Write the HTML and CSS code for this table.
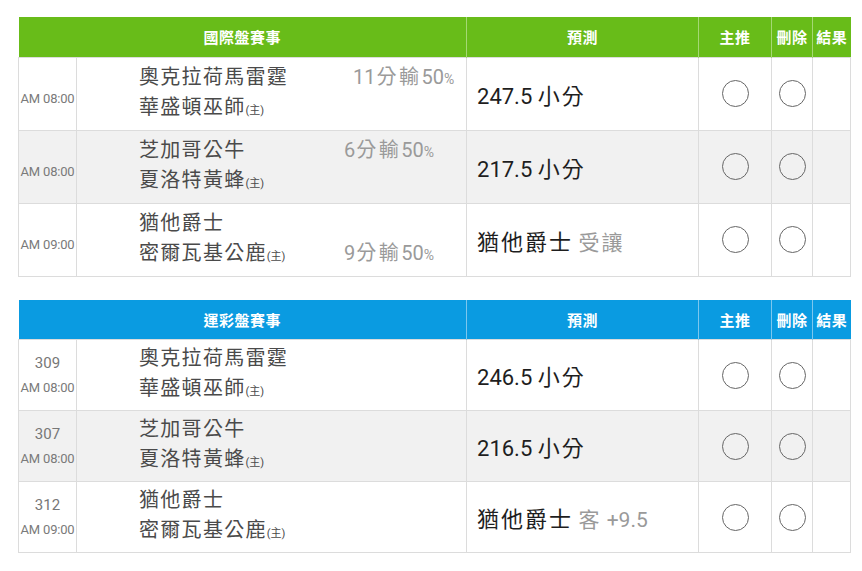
FILE: index.html
```html
<!DOCTYPE html>
<html lang="zh-Hant">
<head>
<meta charset="utf-8">
<link rel="stylesheet" href="styles.css">
</head>
<body>
<div class="page">
  <table class="board board-intl">
    <colgroup>
      <col class="c-time"><col class="c-team"><col class="c-pred"><col class="c-main"><col class="c-del"><col class="c-res">
    </colgroup>
    <thead>
      <tr><th colspan="2">國際盤賽事</th><th>預測</th><th>主推</th><th>刪除</th><th>結果</th></tr>
    </thead>
    <tbody>
      <tr>
        <td class="time time-only"><span class="clock">AM 08:00</span></td>
        <td class="teams">
          <div class="team-wrap">
            <div class="names"><div>奧克拉荷馬雷霆</div><div>華盛頓巫師<small>(主)</small></div></div>
            <div class="spread"><div class="line line-a">11<span class="cjk">分輸</span>50<small>%</small></div><div class="line"></div></div>
          </div>
        </td>
        <td class="pred">247.5 <span class="cjk">小分</span></td>
        <td class="pick"><span class="ring"></span></td>
        <td class="pick"><span class="ring"></span></td>
        <td></td>
      </tr>
      <tr class="alt">
        <td class="time time-only"><span class="clock">AM 08:00</span></td>
        <td class="teams">
          <div class="team-wrap">
            <div class="names"><div>芝加哥公牛</div><div>夏洛特黃蜂<small>(主)</small></div></div>
            <div class="spread"><div class="line">6<span class="cjk">分輸</span>50<small>%</small></div><div class="line"></div></div>
          </div>
        </td>
        <td class="pred">217.5 <span class="cjk">小分</span></td>
        <td class="pick"><span class="ring"></span></td>
        <td class="pick"><span class="ring"></span></td>
        <td></td>
      </tr>
      <tr>
        <td class="time time-only"><span class="clock">AM 09:00</span></td>
        <td class="teams">
          <div class="team-wrap">
            <div class="names"><div>猶他爵士</div><div>密爾瓦基公鹿<small>(主)</small></div></div>
            <div class="spread"><div class="line"></div><div class="line">9<span class="cjk">分輸</span>50<small>%</small></div></div>
          </div>
        </td>
        <td class="pred"><span class="cjk">猶他爵士</span> <span class="note cjk">受讓</span></td>
        <td class="pick"><span class="ring"></span></td>
        <td class="pick"><span class="ring"></span></td>
        <td></td>
      </tr>
    </tbody>
  </table>

  <table class="board board-lottery">
    <colgroup>
      <col class="c-time"><col class="c-team"><col class="c-pred"><col class="c-main"><col class="c-del"><col class="c-res">
    </colgroup>
    <thead>
      <tr><th colspan="2">運彩盤賽事</th><th>預測</th><th>主推</th><th>刪除</th><th>結果</th></tr>
    </thead>
    <tbody>
      <tr>
        <td class="time"><span class="num">309</span><span class="clock">AM 08:00</span></td>
        <td class="teams">
          <div class="names"><div>奧克拉荷馬雷霆</div><div>華盛頓巫師<small>(主)</small></div></div>
        </td>
        <td class="pred">246.5 <span class="cjk">小分</span></td>
        <td class="pick"><span class="ring"></span></td>
        <td class="pick"><span class="ring"></span></td>
        <td></td>
      </tr>
      <tr class="alt">
        <td class="time"><span class="num">307</span><span class="clock">AM 08:00</span></td>
        <td class="teams">
          <div class="names"><div>芝加哥公牛</div><div>夏洛特黃蜂<small>(主)</small></div></div>
        </td>
        <td class="pred">216.5 <span class="cjk">小分</span></td>
        <td class="pick"><span class="ring"></span></td>
        <td class="pick"><span class="ring"></span></td>
        <td></td>
      </tr>
      <tr>
        <td class="time"><span class="num">312</span><span class="clock">AM 09:00</span></td>
        <td class="teams">
          <div class="names"><div>猶他爵士</div><div>密爾瓦基公鹿<small>(主)</small></div></div>
        </td>
        <td class="pred"><span class="cjk">猶他爵士</span> <span class="note"><span class="cjk">客</span> +9.5</span></td>
        <td class="pick"><span class="ring"></span></td>
        <td class="pick"><span class="ring"></span></td>
        <td></td>
      </tr>
    </tbody>
  </table>
</div>
</body>
</html>
```

FILE: styles.css
```css
* { box-sizing: border-box; }
html, body { margin: 0; padding: 0; background: #fff; }
body {
  font-family: Roboto, "Noto Sans CJK TC", "Noto Sans", sans-serif;
  color: #222;
}
.page {
  padding: 17px 12px 0 18px;
  display: flex;
  flex-direction: column;
  gap: 23px;
}
.board {
  width: 832px;
  border-collapse: collapse;
  table-layout: fixed;
}
.c-time { width: 58px; }
.c-team { width: 390px; }
.c-pred { width: 232px; }
.c-main { width: 73px; }
.c-del { width: 41px; }
.c-res { width: 38px; }

.board th {
  height: 40px;
  padding: 0;
  color: #fff;
  font-size: 15px;
  letter-spacing: 0.5px;
  font-weight: 700;
  text-align: center;
  border-left: 1px solid rgba(255,255,255,0.35);
  white-space: nowrap;
}
.board th:first-child { border-left: none; }
.board-intl thead tr { background: #68bc19; }
.board-lottery thead tr { background: #0a9be1; }
.board-intl thead th { border-left-color: #a5d874; }
.board-lottery thead th { border-left-color: #7cc7ee; }

.board td {
  border: 1px solid #dcdcdc;
  padding: 0;
  vertical-align: middle;
}
.board-intl tbody tr { height: 73px; }
.board-lottery tbody tr { height: 71px; }
.board tbody tr.alt { background: #f1f1f1; }

.time {
  text-align: center;
  color: #7a7a7a;
}
.time .num {
  display: block;
  font-size: 15px;
  line-height: 26px;
  color: #777;
}
.time .clock {
  display: block;
  font-size: 13px;
  line-height: 24px;
  letter-spacing: -0.2px;
  white-space: nowrap;
}
.time-only { padding-top: 11px !important; }

.teams {
  padding-left: 62px !important;
  color: #4a4a4a;
}
.team-wrap {
  display: flex;
  align-items: stretch;
}
.names {
  font-size: 20px;
  line-height: 30px;
  letter-spacing: 1.3px;
  width: 205px;
  white-space: nowrap;
}
.names small {
  font-size: 11px;
  letter-spacing: 0;
}
.spread {
  color: #9a9a9a;
  font-size: 20px;
  line-height: 30px;
  white-space: nowrap;
}
.spread .cjk { letter-spacing: 2.5px; padding-left: 1px; }
.spread .line { height: 30px; }
.spread .line-a { padding-left: 9px; }
.spread small { font-size: 14px; }

.pred {
  padding-left: 10px !important;
  font-size: 22px;
  color: #1e1e1e;
  white-space: nowrap;
}
.pred .cjk { letter-spacing: 2px; }
.pred .note { color: #9a9a9a; font-size: 21px; }

.pick { text-align: center; }
.ring {
  display: inline-block;
  width: 27px;
  height: 27px;
  border: 1.6px solid #666;
  border-radius: 50%;
  vertical-align: middle;
}
```
